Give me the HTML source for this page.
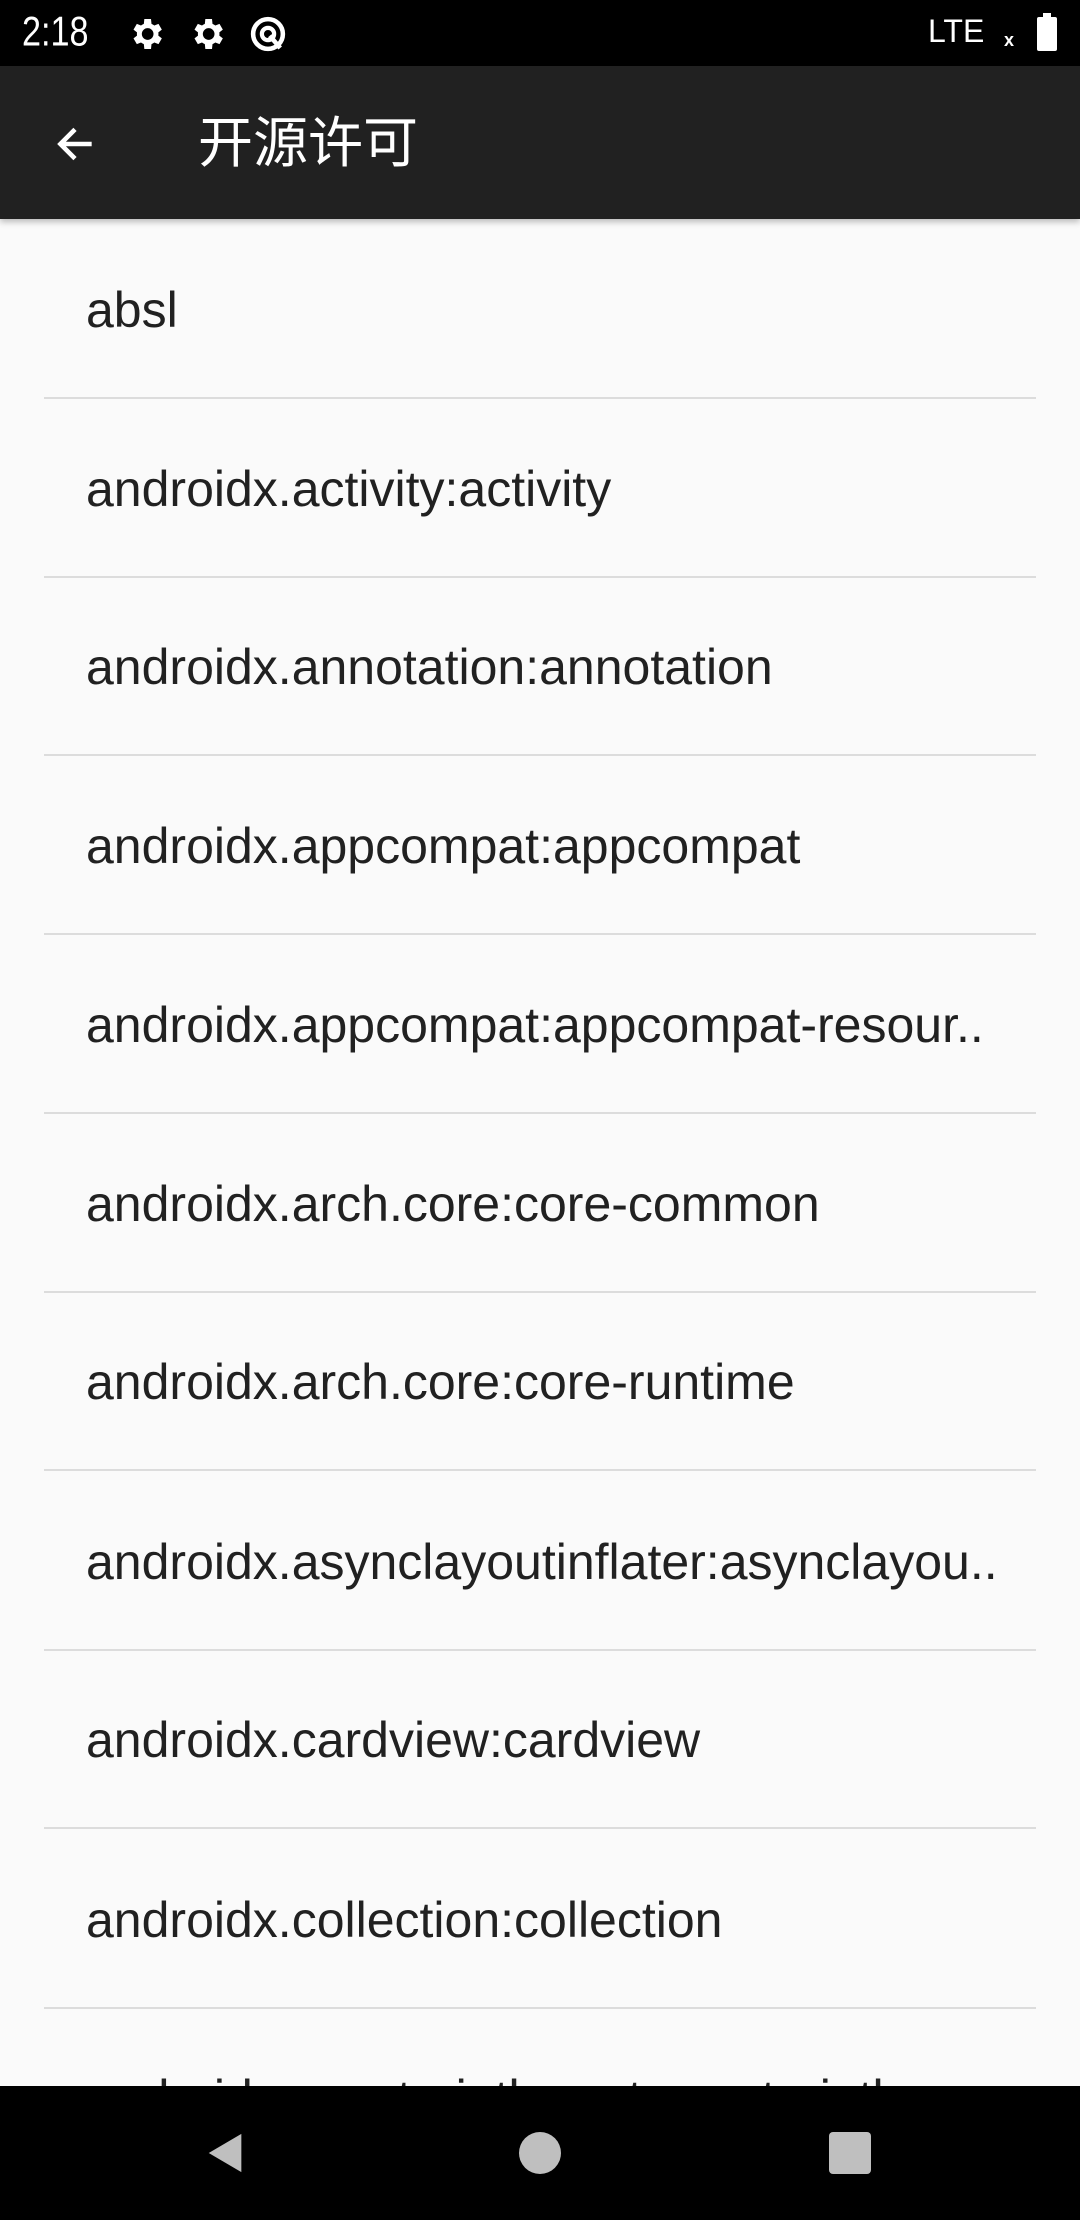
<!DOCTYPE html>
<html><head><meta charset="utf-8"><style>
*{margin:0;padding:0;box-sizing:border-box}
body{width:1080px;height:2220px;overflow:hidden;background:#fafafa;font-family:"Liberation Sans","Noto Sans CJK SC",sans-serif;position:relative}
.sb{position:absolute;top:0;left:0;width:1080px;height:66px;background:#000;color:#fff}
.ab{position:absolute;top:66px;left:0;width:1080px;height:153px;background:#212121;box-shadow:0 3px 6px rgba(0,0,0,.25);z-index:2}
.row{position:absolute;left:0;width:1080px;height:179px}
.row span{position:absolute;left:86px;top:2px;line-height:178px;font-size:50px;color:#212121;white-space:nowrap}
.row i{position:absolute;left:44px;width:992px;bottom:-1px;height:2px;background:#dcdcdc}
.nav{position:absolute;top:2086px;left:0;width:1080px;height:134px;background:#000}
</style></head><body>
<div class="sb">
<div style="position:absolute;left:22px;top:9px;font-size:38px;transform:scaleX(.9) scaleY(1.1);transform-origin:left top">2:18</div>
<svg style="position:absolute;left:126px;top:14px" width="40" height="40" viewBox="0 0 24 24"><path fill="#fff" d="M19.4 13a7.5 7.5 0 000-2l2.1-1.6-2-3.5-2.5 1a7 7 0 00-1.7-1L15 3h-4l-.3 2.9a7 7 0 00-1.7 1l-2.5-1-2 3.5L6.6 11a7.5 7.5 0 000 2l-2.1 1.6 2 3.5 2.5-1a7 7 0 001.7 1L11 21h4l.3-2.9a7 7 0 001.7-1l2.5 1 2-3.5zM13 15.5a3.5 3.5 0 110-7 3.5 3.5 0 010 7z"/></svg>
<svg style="position:absolute;left:187px;top:14px" width="40" height="40" viewBox="0 0 24 24"><path fill="#fff" d="M19.4 13a7.5 7.5 0 000-2l2.1-1.6-2-3.5-2.5 1a7 7 0 00-1.7-1L15 3h-4l-.3 2.9a7 7 0 00-1.7 1l-2.5-1-2 3.5L6.6 11a7.5 7.5 0 000 2l-2.1 1.6 2 3.5 2.5-1a7 7 0 001.7 1L11 21h4l.3-2.9a7 7 0 001.7-1l2.5 1 2-3.5zM13 15.5a3.5 3.5 0 110-7 3.5 3.5 0 010 7z"/></svg>
<svg style="position:absolute;left:247px;top:13px" width="42" height="42" viewBox="0 0 24 24"><circle cx="12" cy="12" r="8.5" fill="none" stroke="#fff" stroke-width="2.6"/><circle cx="12" cy="12" r="3.5" fill="none" stroke="#fff" stroke-width="2.4"/><path d="M13 13l6 7" stroke="#fff" stroke-width="2.6"/></svg>
<div style="position:absolute;left:928px;top:13px;font-size:32px;">LTE</div>
<div style="position:absolute;left:1004px;top:30px;font-size:18px;font-weight:bold">x</div>
<div style="position:absolute;left:1037px;top:17px;width:20px;height:34px;background:#fff;border-radius:2px"></div>
<div style="position:absolute;left:1043px;top:13px;width:8px;height:5px;background:#fff"></div>
</div>
<div class="ab">
<svg style="position:absolute;left:50px;top:53px" width="50" height="50" viewBox="0 0 24 24"><path d="M20 12H5M12 5l-7 7 7 7" fill="none" stroke="#fff" stroke-width="2.2"/></svg>
<div style="position:absolute;left:198px;top:44px;font-size:55px;color:#fff;line-height:66px">开源许可</div>
</div>
<div class="row" style="top:219px"><span>absl</span><i></i></div>
<div class="row" style="top:398px"><span>androidx.activity:activity</span><i></i></div>
<div class="row" style="top:576px"><span>androidx.annotation:annotation</span><i></i></div>
<div class="row" style="top:755px"><span>androidx.appcompat:appcompat</span><i></i></div>
<div class="row" style="top:934px"><span>androidx.appcompat:appcompat-resour..</span><i></i></div>
<div class="row" style="top:1113px"><span>androidx.arch.core:core-common</span><i></i></div>
<div class="row" style="top:1291px"><span>androidx.arch.core:core-runtime</span><i></i></div>
<div class="row" style="top:1471px"><span>androidx.asynclayoutinflater:asynclayou..</span><i></i></div>
<div class="row" style="top:1649px"><span>androidx.cardview:cardview</span><i></i></div>
<div class="row" style="top:1829px"><span>androidx.collection:collection</span><i></i></div>
<div class="row" style="top:2007px"><span>androidx.constraintlayout:constraintla..</span></div>
<div class="nav">
<svg style="position:absolute;left:203px;top:44px" width="46" height="46" viewBox="0 0 24 24"><path d="M20 2v20L3 12z" fill="#fff" opacity=".75"/></svg>
<div style="position:absolute;left:519px;top:46px;width:42px;height:42px;border-radius:50%;background:#fff;opacity:.75"></div>
<div style="position:absolute;left:829px;top:46px;width:42px;height:42px;border-radius:4px;background:#fff;opacity:.75"></div>
</div>
</body></html>
